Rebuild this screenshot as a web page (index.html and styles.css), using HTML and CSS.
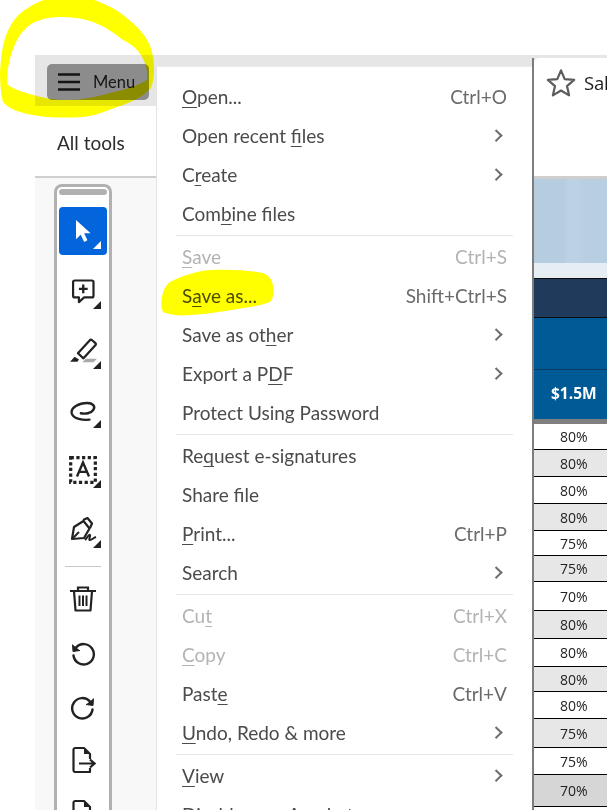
FILE: index.html
```html
<!DOCTYPE html>
<html lang="en">
<head>
<meta charset="utf-8">
<title>Menu</title>
<link rel="stylesheet" href="styles.css">
</head>
<body>
<div class="app">
  <aside class="side">
    <div class="bar">
      <div class="menu-btn">
        <svg class="burger" viewBox="0 0 22 18" width="22" height="18"><path d="M0 1.5h22M0 9h22M0 16.5h22" stroke="#141414" stroke-width="2.4" fill="none"/></svg>
        <span>Menu</span>
      </div>
    </div>
    <div class="tab">All tools</div>
    <div class="rail">
      <div class="tools">
        <div class="handle"></div>
        <div class="tool active">
          <svg viewBox="0 0 24 24" width="28" height="28"><path d="M6 2.5 L6 19 L10 15.2 L13 21.5 L15.8 20 L13 14 L18.5 14 Z" fill="#fff"/></svg>
          <i class="corner"></i>
        </div>
        <div class="tool">
          <svg viewBox="0 0 24 24" width="28" height="28"><path d="M5 3H19.5a1.5 1.5 0 0 1 1.5 1.5V16a1.5 1.5 0 0 1-1.5 1.5H13L8.5 21.5V17.5H5A1.5 1.5 0 0 1 3.5 16V4.500A1.5 1.5 0 0 1 5 3Z" fill="none" stroke="#222" stroke-width="1.9" stroke-linejoin="round"/><path d="M12.200 6.500v7.500M8.500 10.200h7.500" stroke="#222" stroke-width="2"/></svg>
          <i class="corner"></i>
        </div>
        <div class="tool">
          <svg viewBox="0 0 26 24" width="29" height="27"><path d="M8 14.500 L18.500 3 a1.600 1.600 0 0 1 2.200 -.2 l2.800 2.400 a1.600 1.600 0 0 1 .1 2.200 L13 19 Z" fill="#fff" stroke="#222" stroke-width="2" stroke-linejoin="round"/><path d="M1 22 L5 17.500 L9 20 L7.500 22 Z" fill="#222"/><path d="M12 22.500 L15 19.500 L25 19.500 L22 22.500 Z" fill="#aaa"/></svg>
          <i class="corner"></i>
        </div>
        <div class="tool">
          <svg viewBox="0 0 26 24" width="28" height="26"><path d="M19 21 C13 21.500 4 20.500 2.500 15 C1.500 10 9 5.500 17 5.500 C22 5.500 25 8.500 22.500 12 C20.500 15 15 16 11 15" fill="none" stroke="#222" stroke-width="2.200" stroke-linecap="round"/></svg>
          <i class="corner"></i>
        </div>
        <div class="tool">
          <svg viewBox="0 0 28 28" width="30" height="30"><rect x="2.500" y="2.500" width="23" height="23" fill="none" stroke="#222" stroke-width="3" stroke-dasharray="3 2.300"/><path d="M8.400 20 L14 7 L19.600 20 M10.200 15.800 H17.800" fill="none" stroke="#222" stroke-width="2.200"/></svg>
          <i class="corner"></i>
        </div>
        <div class="tool">
          <svg viewBox="0 0 28 26" width="28" height="26"><path d="M3 22 L5 10 L14.500 4 L20.500 11.500 L15 21 Z" fill="none" stroke="#222" stroke-width="2.200" stroke-linejoin="round"/><path d="M14 3 L18.500 1 L23 6.500 L21 11" fill="none" stroke="#222" stroke-width="2.200" stroke-linejoin="round"/><path d="M3 22 L10 15" stroke="#222" stroke-width="2"/><path d="M16 23 C18 21 20 17 21 18 C22 19 19 23 21 23 C23 23 24 21 27 20" fill="none" stroke="#222" stroke-width="2"/></svg>
          <i class="corner"></i>
        </div>
        <div class="rule"></div>
        <div class="tool plain">
          <svg viewBox="0 0 28 28" width="28" height="28"><path d="M1 6h26M9 6V2.500h10V6" fill="none" stroke="#222" stroke-width="2.200"/><path d="M5 6 L6.500 25.500h15L23 6" fill="none" stroke="#222" stroke-width="2.200" stroke-linejoin="round"/><path d="M10.500 10.500v10.500M14 10.500v10.500M17.500 10.500v10.500" stroke="#222" stroke-width="2"/></svg>
        </div>
        <div class="tool plain">
          <svg viewBox="0 0 26 26" width="26" height="26"><path d="M6 6.500 A10.200 10.200 0 1 1 3.500 14.500" fill="none" stroke="#222" stroke-width="2.400" stroke-linecap="round"/><path d="M2.500 3.500 L3 10.500 L10 9.500" fill="#222" stroke="#222" stroke-width="1" stroke-linejoin="round"/></svg>
        </div>
        <div class="tool plain mid">
          <svg viewBox="0 0 26 26" width="26" height="26"><path d="M20 6.500 A10.200 10.200 0 1 0 22.500 14.500" fill="none" stroke="#222" stroke-width="2.400" stroke-linecap="round"/><path d="M23.500 3.500 L23 10.500 L16 9.500" fill="#222" stroke="#222" stroke-width="1" stroke-linejoin="round"/></svg>
        </div>
        <div class="tool plain short">
          <svg viewBox="0 0 26 28" width="26" height="28"><path d="M20 13V8L14 2H5.500A1.800 1.800 0 0 0 3.500 4V24A1.800 1.800 0 0 0 5.500 26H20V22" fill="none" stroke="#222" stroke-width="2.200" stroke-linejoin="round"/><path d="M14 2V8H20Z" fill="#222"/><path d="M9 17.500H24M20 13.500L24.500 17.500L20 21.500" fill="none" stroke="#222" stroke-width="2.200"/></svg>
        </div>
        <div class="tool plain">
          <svg viewBox="0 0 26 28" width="26" height="28"><path d="M20 13V8L14 2H5.500A1.800 1.800 0 0 0 3.500 4V24A1.800 1.800 0 0 0 5.500 26H20V22" fill="none" stroke="#222" stroke-width="2.200" stroke-linejoin="round"/><path d="M14 2V8H20Z" fill="#222"/></svg>
        </div>
      </div>
    </div>
  </aside>
  <main class="doc">
    <div class="sheet">
      <div class="doc-head">
        <svg class="star" viewBox="0 0 26 26" width="30" height="30"><path d="M13 2 L16.200 9.600 L24.400 10.300 L18.200 15.700 L20 23.700 L13 19.500 L6 23.700 L7.800 15.700 L1.600 10.300 L9.800 9.600 Z" fill="none" stroke="#5c5c5c" stroke-width="1.900" stroke-linejoin="round"/></svg>
        <span>Sal</span>
      </div>
      <div class="banner"><div class="banner-low"></div></div>
      <div class="band-navy"></div>
      <div class="band-blue"></div>
      <div class="band-value">$1.5M</div>
      <div class="table">
        <div class="cell">80%</div>
        <div class="cell alt">80%</div>
        <div class="cell">80%</div>
        <div class="cell alt">80%</div>
        <div class="cell">75%</div>
        <div class="cell alt">75%</div>
        <div class="cell">70%</div>
        <div class="cell alt">80%</div>
        <div class="cell">80%</div>
        <div class="cell alt">80%</div>
        <div class="cell">80%</div>
        <div class="cell alt">75%</div>
        <div class="cell">75%</div>
        <div class="cell dark">70%</div>
        <div class="cell"></div>
      </div>
    </div>
  </main>
</div>

<nav class="dropdown">
  <div class="item"><span><u>O</u>pen...</span><kbd>Ctrl+O</kbd></div>
  <div class="item"><span>Open recent <u>fi</u>les</span><b class="chev"></b></div>
  <div class="item"><span>C<u>r</u>eate</span><b class="chev"></b></div>
  <div class="item"><span>Com<u>b</u>ine files</span></div>
  <hr>
  <div class="item off"><span><u>S</u>ave</span><kbd>Ctrl+S</kbd></div>
  <div class="item"><span>S<u>a</u>ve as...</span><kbd>Shift+Ctrl+S</kbd></div>
  <div class="item"><span>Save as ot<u>h</u>er</span><b class="chev"></b></div>
  <div class="item"><span>Export a P<u>D</u>F</span><b class="chev"></b></div>
  <div class="item"><span>Protect Using Password</span></div>
  <hr>
  <div class="item"><span>Re<u>q</u>uest e-signatures</span></div>
  <div class="item"><span>Share file</span></div>
  <div class="item"><span><u>P</u>rint...</span><kbd>Ctrl+P</kbd></div>
  <div class="item"><span>Search</span><b class="chev"></b></div>
  <hr>
  <div class="item off"><span>Cu<u>t</u></span><kbd>Ctrl+X</kbd></div>
  <div class="item off"><span><u>C</u>opy</span><kbd>Ctrl+C</kbd></div>
  <div class="item"><span>Past<u>e</u></span><kbd>Ctrl+V</kbd></div>
  <div class="item"><span><u>U</u>ndo, Redo &amp; more</span><b class="chev"></b></div>
  <hr>
  <div class="item"><span><u>V</u>iew</span><b class="chev"></b></div>
  <div class="item"><span>Disable new Acrobat</span></div>
</nav>

<svg class="marker" viewBox="0 0 607 810" width="607" height="810">
  <path fill="#ffff00" d="M0 73 C1 55 3 42 7 33 C12 22 17 14 28 8 C34 4 38 2 44 0 L94 0 C106 4 118 10 128 19 C142 30 151 42 153 57 C155 70 154 80 151 88 C143 97 130 103 117 107 C104 112 94 116 83 117 C66 118 48 118 33 115 C20 113 9 109 3 102 C1 95 0 84 0 73 Z M7 77 C7 81 7 84 9 86 C16 90 25 93 33 95 C44 98 55 100 67 100 C82 100 96 97 110 93 C124 90 137 86 147 80 C148 72 146 64 142 57 C138 49 131 44 123 40 C114 33 104 26 93 22 C82 18 71 17 60 17 C51 17 41 19 33 23 C26 27 21 33 17 40 C11 52 8 64 7 77 Z"/>
  <path fill="#ffff00" d="M162 297 C163 291 165 286 170 282 C182 276 196 271 210 270 C228 269 248 270 263 273 C270 276 273 281 273 287 C274 294 273 299 270 302 C262 305 252 307 243 308 C226 311 208 314 190 315 C180 316 170 315 163 312 C161 308 161 302 162 297 Z"/>
</svg>
</body>
</html>
```

FILE: styles.css
```css
* { box-sizing: border-box; }
html, body { margin: 0; height: 810px; overflow: hidden; background: #fff; }
body { padding: 55px 0 0 35px; font-family: Lato, "Open Sans", sans-serif; position: relative; }

.app { display: flex; height: 755px; }

/* left panel */
.side { width: 121px; flex: none; display: flex; flex-direction: column; background: #fff; }
.bar { height: 51px; flex: none; background: #e6e6e6; padding: 9px 0 0 12px; }
.menu-btn { width: 102px; height: 36px; background: #8c8c8c; border-radius: 5px; display: flex; align-items: center; padding-left: 11px; gap: 13px; font-size: 16.500px; color: #161616; }
.tab { height: 72px; flex: none; padding: 25px 0 0 22px; font-size: 19px; line-height: 24px; color: #2c2c2c; border-bottom: 2px solid #d0d0d0; }
.rail { flex: 1; background: #f8f8f8; padding: 6px 0 0 19px; overflow: hidden; }
.tools { width: 58px; height: 700px; background: #fff; border: 3px solid #b1b1b1; border-bottom: 0; border-radius: 8px 8px 0 0; padding: 2px; display: flex; flex-direction: column; }
.handle { height: 6px; flex: none; background: #b1b1b1; border-radius: 3px; margin-bottom: 12px; }
.tool { position: relative; flex: none; width: 48px; height: 48px; margin-bottom: 11.750px; display: flex; align-items: center; justify-content: center; }
.tool.active { background: #0265dc; border-radius: 4px; }
.tool.plain { height: 55px; margin-bottom: 0; }
.tool.mid { height: 53px; }
.tool.short { height: 51px; }
.corner { position: absolute; right: 6px; bottom: 6px; width: 0; height: 0; border-left: 8px solid transparent; border-bottom: 8px solid #222; }
.tool.active .corner { border-bottom-color: #fff; }
.rule { flex: none; height: 1px; background: #c8c8c8; margin: 0 6px 5px; }

/* document */
.doc { flex: 1; min-width: 0; background: #e6e6e6; padding: 3px 0 0 376px; overflow: hidden; }
.sheet { width: 75px; border-left: 2px solid #7d7d7d; display: flex; flex-direction: column; }
.doc-head { height: 121px; flex: none; background: #fff; border-radius: 5px 0 0 0; padding: 10px 0 0 12px; display: flex; align-items: flex-start; gap: 8px; font-family: "Open Sans", sans-serif; font-size: 18.500px; line-height: 30px; letter-spacing: -0.2px; color: #1d1d1d; white-space: nowrap; border-bottom: 3px solid #cfcfcf; }
.star { flex: none; }
.banner { height: 100px; flex: none; display: flex; flex-direction: column; justify-content: flex-end; background: linear-gradient(90deg, #b6cde0 0, #b6cde0 42%, #bcd1e3 46%, #bcd1e3 62%, #b8cfe1 68%, #b8cfe1 100%); border-bottom: 1px solid #0c0c0c; }
.banner-low { height: 15px; background: #e6edf3; }
.band-navy { height: 39px; flex: none; background: #1f3a5a; border-bottom: 1px solid #0c0c0c; }
.band-blue { height: 52px; flex: none; background: #005a96; border-bottom: 1px solid #0b3a5e; }
.band-value { height: 54px; flex: none; background: #005a96; border-bottom: 5px solid #7f7f7f; color: #fff; font-family: "Open Sans", sans-serif; font-weight: 700; font-size: 15.500px; display: flex; align-items: center; padding: 0 0 3px 17px; }
.table { flex: none; background: #000; display: grid; grid-template-columns: 1fr; row-gap: 1px; grid-template-rows: 25px 26px 26px 26px 24px 25px 28px 27px 27px 24px 26px 28px 26px 31px 10px; }
.cell { background: #fff; color: #222; font-family: "Open Sans", sans-serif; font-size: 14px; display: flex; align-items: center; padding-left: 26px; }
.cell.alt { background: #e7e7e7; }
.cell.dark { background: #d6d6d6; }

/* dropdown */
.dropdown { position: absolute; left: 156px; top: 66px; width: 376px; height: 760px; background: #fff; border-left: 1px solid #e3e3e3; border-top: 1px solid #ececec; padding: 11px 25px 0 25px; color: #4b4b4b; font-size: 19px; }
.item { height: 39px; padding-bottom: 2px; display: flex; align-items: center; justify-content: space-between; white-space: nowrap; }
.item kbd { font: inherit; color: #6a6a6a; }
.item.off, .item.off kbd { color: #b3b3b3; }
.chev { width: 8.500px; height: 8.500px; margin-right: 7px; border-top: 2.400px solid #6e6e6e; border-right: 2.400px solid #6e6e6e; transform: rotate(45deg); }
.dropdown hr { margin: 1px -6px 2px; border: 0; height: 1px; background: #e6e6e6; }
u { text-underline-offset: 3px; text-decoration-thickness: 1px; }

/* highlighter */
.marker { position: absolute; left: 0; top: 0; mix-blend-mode: multiply; pointer-events: none; }
```
